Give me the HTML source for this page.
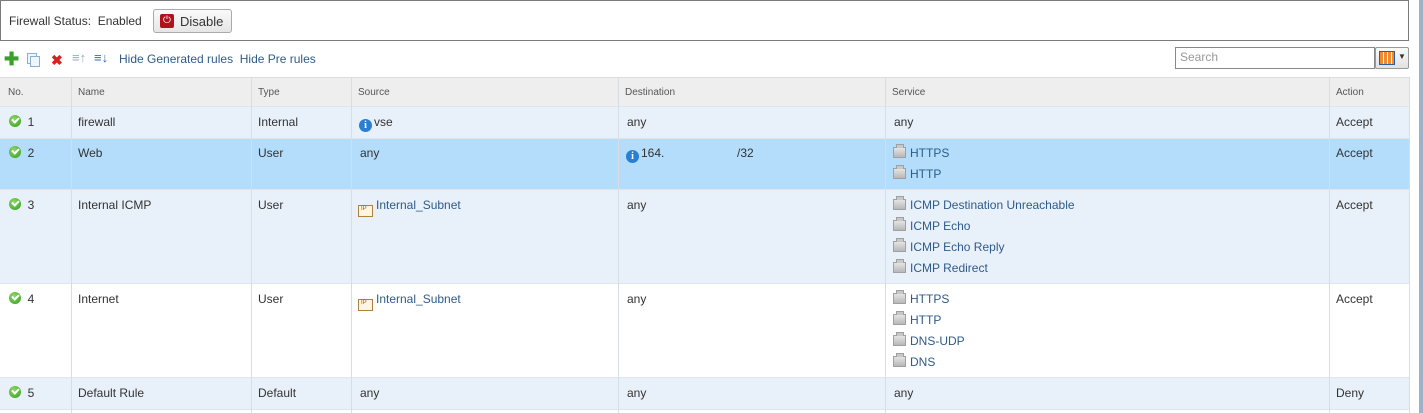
<!DOCTYPE html>
<html><head><meta charset="utf-8"><style>
*{box-sizing:border-box;margin:0;padding:0}
body{width:1423px;height:413px;background:#fff;font-family:"Liberation Sans",Arial,sans-serif;font-size:12px;color:#333;position:relative;overflow:hidden}
.a{position:absolute}
.top{left:0;top:0;width:1409px;height:41px;border:1px solid #7a7a7a;background:#fff}
.btn{left:153px;top:9px;width:79px;height:24px;border:1px solid #aaa;border-radius:3px;background:linear-gradient(#fafafa,#e6e6e6);font-size:13px}
.lnk{color:#2e5b8a}
.row{position:absolute;left:0;width:1409px;border-bottom:1px solid #dde6ee}
.vl{position:absolute;top:77px;height:336px;width:1px;background:#d6dde4}
.c{position:absolute;white-space:nowrap}
.h{font-size:10px;color:#555}
.chk{display:inline-block;width:12px;height:12px;border-radius:50%;background:radial-gradient(circle at 40% 35%,#8fdb6a,#2f9a1a);position:relative;vertical-align:-1px}
.chk:after{content:"";position:absolute;left:3px;top:2px;width:5px;height:3px;border-left:2px solid #fff;border-bottom:2px solid #fff;transform:rotate(-45deg)}
.info{display:inline-block;width:13px;height:13px;border-radius:50%;background:#2a7fd4;color:#fff;font:bold 10px/13px "Liberation Serif",serif;text-align:center;vertical-align:-2px;margin-right:2px}
.svc{display:inline-block;width:13px;height:11px;background:linear-gradient(#e4e4e4,#b8b8b8);border:1px solid #a0a0a0;vertical-align:-1px;margin-right:4px;position:relative}
.svc:before{content:"";position:absolute;left:2px;top:-4px;width:6px;height:3px;background:#c8c8c8;border:1px solid #a0a0a0;border-bottom:0}
.ip{display:inline-block;width:15px;height:12px;border:1px solid #b08040;background:#fff6e0;font-size:6px;color:#c05000;line-height:7px;padding-left:2px;vertical-align:-1px;margin-right:3px}
</style></head><body>
<div class="a top"></div>
<div class="a" style="left:9px;top:14px;font-size:12px">Firewall Status:&nbsp; Enabled</div>
<div class="a btn"><span class="a" style="left:6px;top:4px;width:14px;height:14px;background:#b0121b;border-radius:2px;color:#fff;font-size:10px;text-align:center;line-height:14px">⏻</span><span class="a" style="left:26px;top:4px">Disable</span></div>

<div class="a" style="left:4px;top:52px;color:#3aa02a;font-weight:bold;font-size:18px;line-height:14px">✚</div>
<div class="a" style="left:27px;top:53px;width:10px;height:11px;border:1px solid #8ab0d0;background:#eef5fb"></div>
<div class="a" style="left:30px;top:56px;width:10px;height:11px;border:1px solid #8ab0d0;background:#eef5fb"></div>
<div class="a" style="left:51px;top:52px;color:#d92020;font-weight:bold;font-size:14px">✖</div>
<div class="a" style="left:72px;top:50px;color:#9ab;font-size:13px">≡↑</div>
<div class="a" style="left:94px;top:50px;color:#3a6d9e;font-size:13px">≡↓</div>
<div class="a lnk" style="left:119px;top:52px">Hide Generated rules&nbsp; Hide Pre rules</div>
<div class="a" style="left:1175px;top:47px;width:200px;height:22px;border:1px solid #888;padding:2px 4px;color:#999">Search</div>
<div class="a" style="left:1375px;top:47px;width:34px;height:22px;border:1px solid #999;border-radius:2px;background:linear-gradient(#fafafa,#e2e2e2)"><div class="a" style="left:3px;top:3px;width:16px;height:14px;border:1px solid #2a5ea0;background:repeating-linear-gradient(90deg,#f08a30 0 3px,#fff 3px 4px)"></div><div class="a" style="left:22px;top:4px;font-size:8px">▼</div></div>

<div class="row" style="top:77px;height:30px;background:#eeeeee;border-top:1px solid #ddd"></div>
<div class="row" style="top:107px;height:32px;background:#e8f0f9"></div>
<div class="row" style="top:139px;height:51px;background:#b3ddfb"></div>
<div class="row" style="top:190px;height:94px;background:#e8f0f9"></div>
<div class="row" style="top:284px;height:94px;background:#fff"></div>
<div class="row" style="top:378px;height:32px;background:#e8f0f9"></div>
<div class="vl" style="left:71px"></div><div class="vl" style="left:251px"></div><div class="vl" style="left:351px"></div><div class="vl" style="left:618px"></div><div class="vl" style="left:885px"></div><div class="vl" style="left:1329px"></div><div class="vl" style="left:1409px;background:#ddd"></div>
<div class="a" style="left:1419px;top:0;width:4px;height:413px;background:#9db2c8"></div>

<div class="c h" style="left:8px;top:87px">No.</div><div class="c h" style="left:78px;top:87px">Name</div><div class="c h" style="left:258px;top:87px">Type</div><div class="c h" style="left:358px;top:87px">Source</div><div class="c h" style="left:625px;top:87px">Destination</div><div class="c h" style="left:892px;top:87px">Service</div><div class="c h" style="left:1336px;top:87px">Action</div>

<div class="c" style="left:9px;top:115px"><span class="chk"></span>&nbsp; 1</div><div class="c" style="left:78px;top:115px">firewall</div><div class="c" style="left:258px;top:115px">Internal</div><div class="c" style="left:359px;top:115px"><span class="info">i</span>vse</div><div class="c" style="left:627px;top:115px">any</div><div class="c" style="left:894px;top:115px">any</div><div class="c" style="left:1336px;top:115px">Accept</div>

<div class="c" style="left:9px;top:146px"><span class="chk"></span>&nbsp; 2</div><div class="c" style="left:78px;top:146px">Web</div><div class="c" style="left:258px;top:146px">User</div><div class="c" style="left:360px;top:146px">any</div><div class="c" style="left:626px;top:146px"><span class="info">i</span>164.</div><div class="c" style="left:737px;top:146px">/32</div><div class="c lnk" style="left:893px;top:146px"><span class="svc"></span>HTTPS</div><div class="c lnk" style="left:893px;top:167px"><span class="svc"></span>HTTP</div><div class="c" style="left:1336px;top:146px">Accept</div>

<div class="c" style="left:9px;top:198px"><span class="chk"></span>&nbsp; 3</div><div class="c" style="left:78px;top:198px">Internal ICMP</div><div class="c" style="left:258px;top:198px">User</div><div class="c lnk" style="left:358px;top:198px"><span class="ip">IP</span>Internal_Subnet</div><div class="c" style="left:627px;top:198px">any</div>
<div class="c lnk" style="left:893px;top:198px"><span class="svc"></span>ICMP Destination Unreachable</div><div class="c lnk" style="left:893px;top:219px"><span class="svc"></span>ICMP Echo</div><div class="c lnk" style="left:893px;top:240px"><span class="svc"></span>ICMP Echo Reply</div><div class="c lnk" style="left:893px;top:261px"><span class="svc"></span>ICMP Redirect</div><div class="c" style="left:1336px;top:198px">Accept</div>

<div class="c" style="left:9px;top:292px"><span class="chk"></span>&nbsp; 4</div><div class="c" style="left:78px;top:292px">Internet</div><div class="c" style="left:258px;top:292px">User</div><div class="c lnk" style="left:358px;top:292px"><span class="ip">IP</span>Internal_Subnet</div><div class="c" style="left:627px;top:292px">any</div>
<div class="c lnk" style="left:893px;top:292px"><span class="svc"></span>HTTPS</div><div class="c lnk" style="left:893px;top:313px"><span class="svc"></span>HTTP</div><div class="c lnk" style="left:893px;top:334px"><span class="svc"></span>DNS-UDP</div><div class="c lnk" style="left:893px;top:355px"><span class="svc"></span>DNS</div><div class="c" style="left:1336px;top:292px">Accept</div>

<div class="c" style="left:9px;top:386px"><span class="chk"></span>&nbsp; 5</div><div class="c" style="left:78px;top:386px">Default Rule</div><div class="c" style="left:258px;top:386px">Default</div><div class="c" style="left:360px;top:386px">any</div><div class="c" style="left:627px;top:386px">any</div><div class="c" style="left:894px;top:386px">any</div><div class="c" style="left:1336px;top:386px">Deny</div>
</body></html>
